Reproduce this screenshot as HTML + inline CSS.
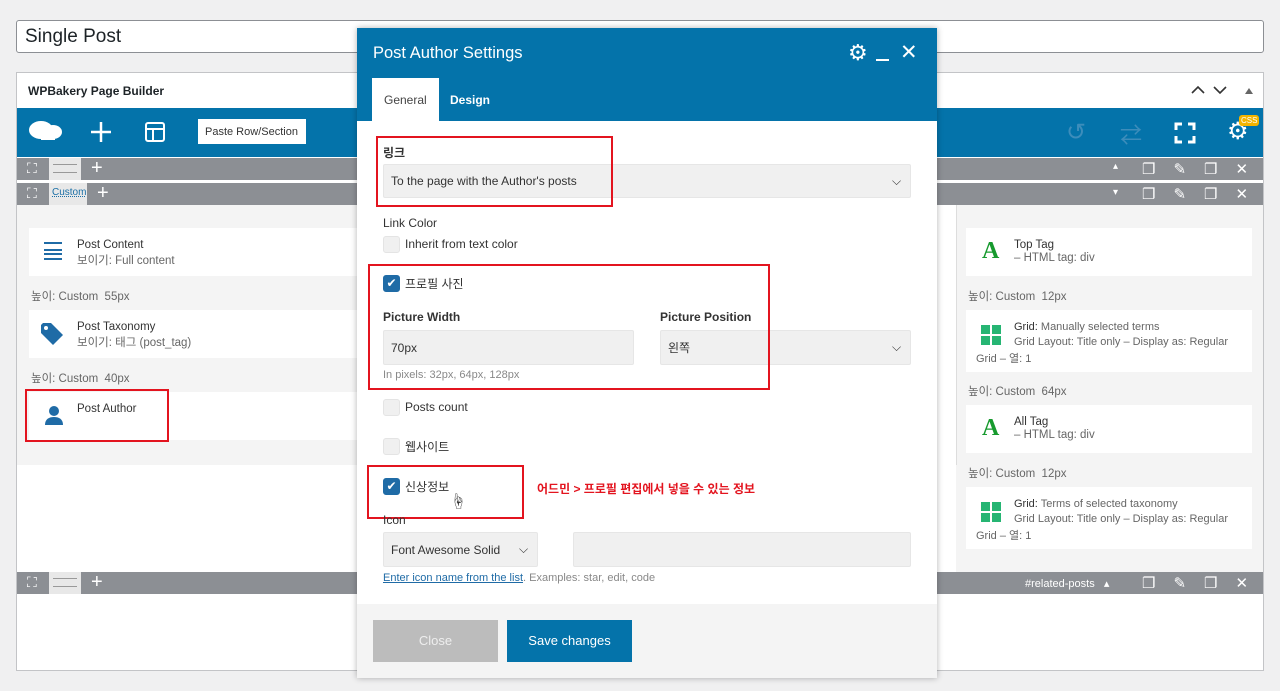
<!DOCTYPE html><html><head><meta charset="utf-8"><style>
*{box-sizing:border-box;margin:0;padding:0}
body{width:1280px;height:691px;background:#f0f0f1;font-family:"Liberation Sans","Noto Sans CJK KR",sans-serif;font-size:12px;color:#333;position:relative;overflow:hidden}
.a{position:absolute;white-space:nowrap}
.bar{background:#8c8f94;height:22px}
.el{background:#fff;position:absolute}
.t{font-size:11.5px;color:#333}
.s{font-size:11.5px;color:#666}
.w{color:#fff;font-size:15px}
.cb{position:absolute;width:17px;height:17px;border-radius:3px;background:#f0f0f0;border:1px solid #e4e4e4}
.cb.on{background:#1f6ba6;border-color:#1f6ba6}
.red{position:absolute;border:2px solid #e3141f}
.inp{position:absolute;background:#f0f0f0;border:1px solid #e6e6e6;border-radius:2px;font-size:12px;color:#333;padding-left:7px;display:flex;align-items:center;white-space:nowrap}
.lbl{position:absolute;font-size:12px;color:#333;white-space:nowrap}
</style></head><body>
<div class="a" style="left:16px;top:20px;width:1248px;height:33px;background:#fff;border:1px solid #8c8f94;border-radius:3px;font-size:19px;padding:5px 8px;color:#1d2327">Single Post</div>
<div class="a" style="left:16px;top:72px;width:1248px;height:599px;background:#fff;border:1px solid #c3c4c7"></div>
<div class="a" style="left:28px;top:84px;font-size:12px;font-weight:bold;color:#1d2327">WPBakery Page Builder</div>
<svg class="a" style="left:1190px;top:84px" width="40" height="12" fill="none" stroke="#333" stroke-width="1.6"><path d="M2 9l6-6 6 6M24 3l6 6 6-6"/></svg>
<div class="a" style="left:1245px;top:84px;width:0;height:0;border:4px solid transparent;border-bottom:6px solid #666"></div>
<div class="a" style="left:17px;top:108px;width:1246px;height:49px;background:#0473aa"></div>
<svg class="a" style="left:29px;top:118px" width="36" height="28"><ellipse cx="12" cy="12" rx="12" ry="9" fill="#fff"/><ellipse cx="24" cy="14" rx="9" ry="7" fill="#fff"/><rect x="12" y="16" width="14" height="6" fill="#fff"/></svg>
<svg class="a" style="left:91px;top:122px" width="20" height="20" stroke="#fff" stroke-width="2.5"><path d="M10 0v20M0 10h20"/></svg>
<svg class="a" style="left:145px;top:122px" width="20" height="20"><rect x="1" y="1" width="18" height="18" rx="2" fill="none" stroke="#fff" stroke-width="2"/><line x1="1" y1="7" x2="19" y2="7" stroke="#fff" stroke-width="2"/><line x1="8" y1="7" x2="8" y2="19" stroke="#fff" stroke-width="2"/></svg>
<div class="a" style="left:198px;top:119px;width:108px;height:25px;background:#fff;font-size:11px;padding:7px 7px;color:#333">Paste Row/Section</div>
<div class="a" style="left:1066px;top:118px;font-size:24px;color:#3d8dbb">↺</div>
<div class="a" style="left:1120px;top:118px;font-size:22px;color:#3d8dbb">⇄</div>
<svg class="a" style="left:1174px;top:122px" width="22" height="22" fill="none" stroke="#fff" stroke-width="3"><path d="M2 8V2h6M14 2h6v6M20 14v6h-6M8 20H2v-6"/></svg>
<div class="a w" style="left:1227px;top:117px;font-size:24px">⚙</div>
<div class="a" style="left:1239px;top:115px;background:#f4b400;color:#fff;font-size:8px;border-radius:3px;padding:1px 2px">CSS</div>
<div class="a bar" style="left:17px;top:158px;width:1246px"></div>
<div class="a" style="left:49px;top:158px;width:32px;height:22px;background:#e8e8e8"></div>
<div class="a" style="left:53px;top:164px;width:24px;height:9px;border-top:1px solid #999;border-bottom:1px solid #999"></div>
<div class="a bar" style="left:17px;top:183px;width:1246px"></div>
<div class="a" style="left:49px;top:183px;width:38px;height:22px;background:#e8e8e8;font-size:10px;color:#1a6fa6;padding:4px 3px;text-decoration:underline dotted">Custom</div>
<div class="a w" style="left:27px;top:160px;font-size:14px">⛶</div><div class="a w" style="left:27px;top:185px;font-size:14px">⛶</div>
<div class="a w" style="left:91px;top:157px;font-size:20px">+</div><div class="a w" style="left:97px;top:182px;font-size:20px">+</div>
<div class="a w" style="left:1113px;top:161px;font-size:10px">▴</div><div class="a w" style="left:1113px;top:187px;font-size:10px">▾</div>
<div class="a w" style="left:1142px;top:160px;font-size:15px;letter-spacing:18px">❐✎❐✕</div>
<div class="a w" style="left:1142px;top:185px;font-size:15px;letter-spacing:18px">❐✎❐✕</div>
<div class="a" style="left:17px;top:205px;width:1246px;height:260px;background:#f4f4f4"></div>
<div class="a" style="left:956px;top:465px;width:307px;height:107px;background:#f4f4f4"></div>
<div class="el" style="left:29px;top:228px;width:330px;height:48px"></div>
<div class="a" style="left:44px;top:242px;width:18px;height:18px;border-top:2px solid #1f6ba6;border-bottom:2px solid #1f6ba6"><div style="margin-top:5px;border-top:2px solid #1f6ba6;border-bottom:2px solid #1f6ba6;height:6px"></div></div>
<div class="a t" style="left:77px;top:239px">Post Content</div><div class="a s" style="left:77px;top:252px">보이기: Full content</div>
<div class="a s" style="left:31px;top:288px">높이: Custom &nbsp;55px</div>
<div class="el" style="left:29px;top:310px;width:330px;height:48px"></div>
<svg class="a" style="left:41px;top:323px" width="26" height="22" fill="#1f6ba6"><path d="M0 2v8l12 12 10-10L10 0H2z"/><circle cx="5" cy="5" r="2" fill="#fff"/></svg>
<div class="a t" style="left:77px;top:321px">Post Taxonomy</div><div class="a s" style="left:77px;top:334px">보이기: 태그 (post_tag)</div>
<div class="a s" style="left:31px;top:370px">높이: Custom &nbsp;40px</div>
<div class="el" style="left:29px;top:392px;width:330px;height:48px"></div>
<svg class="a" style="left:44px;top:405px" width="20" height="20" fill="#1f6ba6"><circle cx="10" cy="6" r="5"/><path d="M1 20c0-6 4-8 9-8s9 2 9 8z"/></svg>
<div class="a t" style="left:77px;top:403px">Post Author</div>
<div class="red" style="left:25px;top:389px;width:144px;height:53px"></div>
<div class="a" style="left:936px;top:205px;width:20px;height:260px;background:#fff"></div>
<div class="a" style="left:956px;top:205px;width:1px;height:260px;background:#ddd"></div>
<div class="el" style="left:966px;top:228px;width:286px;height:48px"></div>
<div class="a" style="left:982px;top:238px;font-size:24px;font-weight:bold;color:#179a2e;font-family:'Liberation Serif'">A</div>
<div class="a t" style="left:1014px;top:239px">Top Tag</div><div class="a s" style="left:1014px;top:252px">– HTML tag: div</div>
<div class="a s" style="left:968px;top:288px">높이: Custom &nbsp;12px</div>
<div class="el" style="left:966px;top:310px;width:286px;height:62px"></div>
<svg class="a" style="left:981px;top:325px" width="20" height="20" fill="#26b573"><rect width="9" height="9"/><rect x="11" width="9" height="9"/><rect y="11" width="9" height="9"/><rect x="11" y="11" width="9" height="9"/></svg>
<div class="a s" style="left:1014px;top:321px;font-size:11px"><span style="color:#333">Grid:</span> Manually selected terms</div><div class="a s" style="left:1014px;top:336px;font-size:11px">Grid Layout: Title only – Display as: Regular</div><div class="a s" style="left:976px;top:350px;font-size:11px">Grid – 열: 1</div>
<div class="a s" style="left:968px;top:383px">높이: Custom &nbsp;64px</div>
<div class="el" style="left:966px;top:405px;width:286px;height:48px"></div>
<div class="a" style="left:982px;top:415px;font-size:24px;font-weight:bold;color:#179a2e;font-family:'Liberation Serif'">A</div>
<div class="a t" style="left:1014px;top:416px">All Tag</div><div class="a s" style="left:1014px;top:429px">– HTML tag: div</div>
<div class="a s" style="left:968px;top:465px">높이: Custom &nbsp;12px</div>
<div class="el" style="left:966px;top:487px;width:286px;height:62px"></div>
<svg class="a" style="left:981px;top:502px" width="20" height="20" fill="#26b573"><rect width="9" height="9"/><rect x="11" width="9" height="9"/><rect y="11" width="9" height="9"/><rect x="11" y="11" width="9" height="9"/></svg>
<div class="a s" style="left:1014px;top:498px;font-size:11px"><span style="color:#333">Grid:</span> Terms of selected taxonomy</div><div class="a s" style="left:1014px;top:513px;font-size:11px">Grid Layout: Title only – Display as: Regular</div><div class="a s" style="left:976px;top:527px;font-size:11px">Grid – 열: 1</div>
<div class="a bar" style="left:17px;top:572px;width:1246px"></div>
<div class="a" style="left:49px;top:572px;width:32px;height:22px;background:#e8e8e8"></div>
<div class="a" style="left:53px;top:578px;width:24px;height:9px;border-top:1px solid #999;border-bottom:1px solid #999"></div>
<div class="a w" style="left:27px;top:574px;font-size:14px">⛶</div><div class="a w" style="left:91px;top:571px;font-size:20px">+</div>
<div class="a w" style="left:1025px;top:577px;font-size:11px">#related-posts &nbsp;&nbsp;▴</div>
<div class="a w" style="left:1142px;top:574px;font-size:15px;letter-spacing:18px">❐✎❐✕</div>

<!-- modal -->
<div class="a" style="left:357px;top:28px;width:580px;height:650px;background:#fff;box-shadow:0 0 6px rgba(0,0,0,.3)"></div>
<div class="a" style="left:357px;top:28px;width:580px;height:93px;background:#0473aa"></div>
<div class="a" style="left:373px;top:44px;color:#fff;font-size:16.5px">Post Author Settings</div>
<div class="a w" style="left:848px;top:40px;font-size:22px">⚙</div>
<div class="a" style="left:876px;top:59px;width:13px;height:2px;background:#fff"></div>
<div class="a w" style="left:900px;top:40px;font-size:21px">✕</div>
<div class="a" style="left:372px;top:78px;width:67px;height:43px;background:#fff;color:#444;font-size:12px;padding:15px 12px">General</div>
<div class="a" style="left:450px;top:93px;color:#fff;font-size:12px;font-weight:bold">Design</div>
<div class="lbl" style="left:383px;top:144px;font-weight:bold">링크</div>
<div class="inp" style="left:383px;top:164px;width:528px;height:34px">To the page with the Author's posts</div>
<div class="a" style="left:892px;top:174px;font-size:12px">⌵</div>
<div class="red" style="left:376px;top:136px;width:237px;height:71px"></div>
<div class="lbl" style="left:383px;top:216px">Link Color</div>
<div class="cb" style="left:383px;top:236px"></div><div class="lbl" style="left:405px;top:237px">Inherit from text color</div>
<div class="cb on" style="left:383px;top:275px;color:#fff;font-size:12px;text-align:center;line-height:15px">✔</div><div class="lbl" style="left:405px;top:275px">프로필 사진</div>
<div class="lbl" style="left:383px;top:310px;font-weight:bold;color:#333">Picture Width</div>
<div class="lbl" style="left:660px;top:310px;font-weight:bold;color:#333">Picture Position</div>
<div class="inp" style="left:383px;top:330px;width:251px;height:35px">70px</div>
<div class="inp" style="left:660px;top:330px;width:251px;height:35px">왼쪽</div>
<div class="a" style="left:892px;top:340px;font-size:12px">⌵</div>
<div class="a" style="left:383px;top:369px;font-size:11px;color:#888">In pixels: 32px, 64px, 128px</div>
<div class="red" style="left:368px;top:264px;width:402px;height:126px"></div>
<div class="cb" style="left:383px;top:399px"></div><div class="lbl" style="left:405px;top:400px">Posts count</div>
<div class="cb" style="left:383px;top:438px"></div><div class="lbl" style="left:405px;top:438px">웹사이트</div>
<div class="cb on" style="left:383px;top:478px;color:#fff;font-size:12px;text-align:center;line-height:15px">✔</div><div class="lbl" style="left:405px;top:478px">신상정보</div>
<div class="a" style="left:450px;top:488px;font-size:16px">☝</div>
<div class="red" style="left:367px;top:465px;width:157px;height:54px"></div>
<div class="a" style="left:537px;top:480px;color:#e3141f;font-size:12px;font-weight:bold">어드민 &gt; 프로필 편집에서 넣을 수 있는 정보</div>
<div class="lbl" style="left:383px;top:513px">Icon</div>
<div class="inp" style="left:383px;top:532px;width:155px;height:35px">Font Awesome Solid</div>
<div class="a" style="left:519px;top:542px;font-size:12px">⌵</div>
<div class="inp" style="left:573px;top:532px;width:338px;height:35px"></div>
<div class="a" style="left:383px;top:572px;font-size:11px;color:#888"><span style="color:#1f6ba6;text-decoration:underline">Enter icon name from the list</span>. Examples: star, edit, code</div>
<div class="a" style="left:357px;top:604px;width:580px;height:74px;background:#f4f4f4"></div>
<div class="a" style="left:373px;top:620px;width:125px;height:42px;background:#bcbcbc;color:#eee;font-size:13px;text-align:center;line-height:42px">Close</div>
<div class="a" style="left:507px;top:620px;width:125px;height:42px;background:#0473aa;color:#fff;font-size:13px;text-align:center;line-height:42px">Save changes</div>
</body></html>
